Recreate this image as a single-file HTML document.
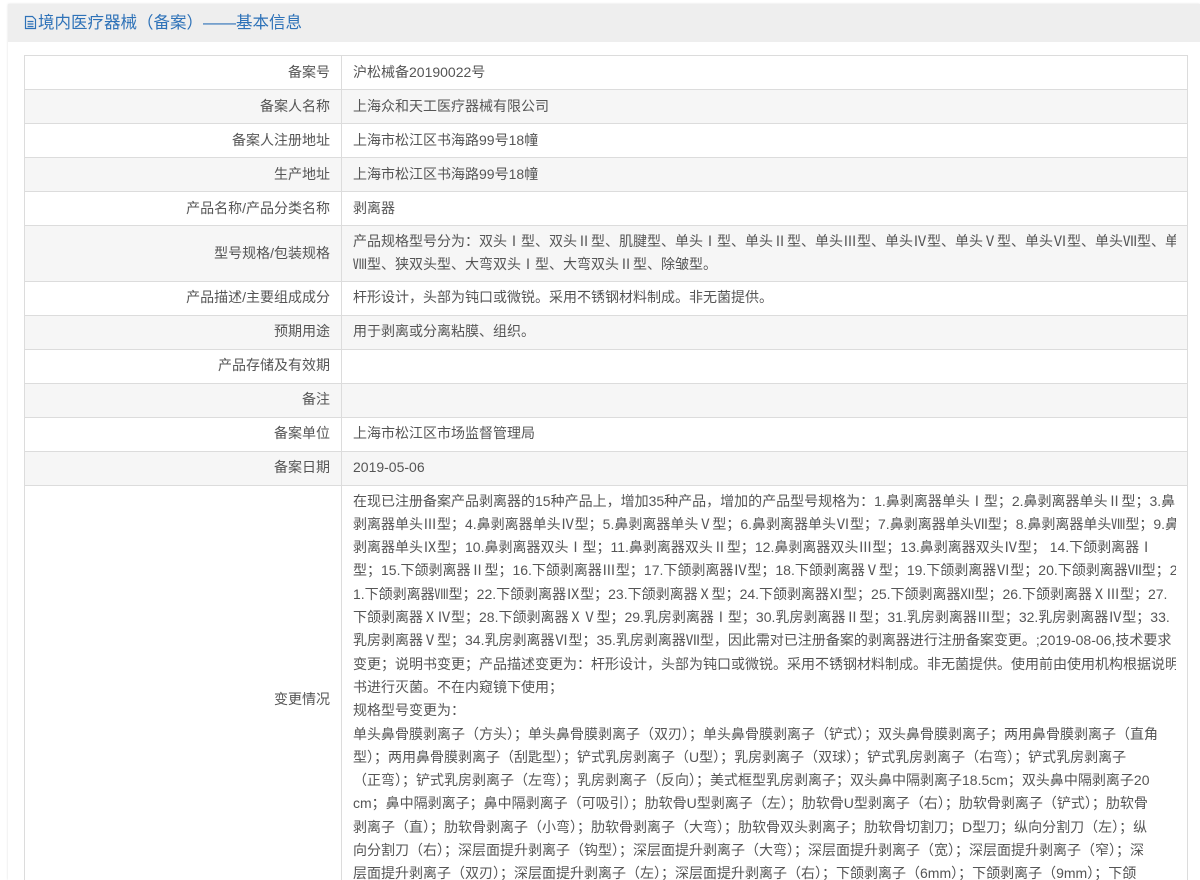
<!DOCTYPE html>
<html><head><meta charset="utf-8"><style>
html,body{margin:0;background:#fff;font-family:"Liberation Sans","Noto Sans CJK SC",sans-serif;color:#555;font-size:14px;width:1200px;height:880px;overflow:hidden}
.panel{position:absolute;left:8px;top:4px;width:1192px;height:876px;background:#fff;box-shadow:0 0 2px #ddd;overflow:hidden}
.hd{height:38px;background:#eeeeee;color:#2e72b8;font-size:16.5px;line-height:38px;padding-left:16px}
table{position:absolute;left:16px;top:51px;width:1164px;border-collapse:collapse;table-layout:fixed}
td{border:1px solid #dcdcdc;padding:0 11px;height:33px;line-height:23.3px;vertical-align:middle}
td.l{text-align:right;width:294px}
tr:nth-child(even) td{background:#f6f6f6}
.v div{white-space:nowrap;overflow:hidden}
</style></head><body>
<div class="panel">
<div class="hd"><svg width="13" height="15" viewBox="0 0 13 15" style="vertical-align:-2px;margin-right:1px"><path d="M1.5 1.5h7l3 3v9h-10z M3.5 6.5h6 M3.5 9h6 M3.5 11.5h6" fill="none" stroke="#2e72b8" stroke-width="1.2"/></svg>境内医疗器械（备案）——基本信息</div>
<table>
<tr><td class="l">备案号</td><td>沪松械备20190022号</td></tr>
<tr><td class="l">备案人名称</td><td>上海众和天工医疗器械有限公司</td></tr>
<tr><td class="l">备案人注册地址</td><td>上海市松江区书海路99号18幢</td></tr>
<tr><td class="l">生产地址</td><td>上海市松江区书海路99号18幢</td></tr>
<tr><td class="l">产品名称/产品分类名称</td><td>剥离器</td></tr>
<tr><td class="l" style="height:54px">型号规格/包装规格</td><td class="v" style="padding-top:4px;padding-bottom:4px"><div>产品规格型号分为：双头Ⅰ型、双头Ⅱ型、肌腱型、单头Ⅰ型、单头Ⅱ型、单头Ⅲ型、单头Ⅳ型、单头Ⅴ型、单头Ⅵ型、单头Ⅶ型、单头<br>Ⅷ型、狭双头型、大弯双头Ⅰ型、大弯双头Ⅱ型、除皱型。</div></td></tr>
<tr><td class="l">产品描述/主要组成成分</td><td>杆形设计，头部为钝口或微锐。采用不锈钢材料制成。非无菌提供。</td></tr>
<tr><td class="l">预期用途</td><td>用于剥离或分离粘膜、组织。</td></tr>
<tr><td class="l">产品存储及有效期</td><td></td></tr>
<tr><td class="l">备注</td><td></td></tr>
<tr><td class="l">备案单位</td><td>上海市松江区市场监督管理局</td></tr>
<tr><td class="l">备案日期</td><td>2019-05-06</td></tr>
<tr><td class="l">变更情况</td><td class="v" style="padding-top:4px;padding-bottom:4px"><div>在现已注册备案产品剥离器的15种产品上，增加35种产品，增加的产品型号规格为：1.鼻剥离器单头Ⅰ型；2.鼻剥离器单头Ⅱ型；3.鼻<br>剥离器单头Ⅲ型；4.鼻剥离器单头Ⅳ型；5.鼻剥离器单头Ⅴ型；6.鼻剥离器单头Ⅵ型；7.鼻剥离器单头Ⅶ型；8.鼻剥离器单头Ⅷ型；9.鼻<br>剥离器单头Ⅸ型；10.鼻剥离器双头Ⅰ型；11.鼻剥离器双头Ⅱ型；12.鼻剥离器双头Ⅲ型；13.鼻剥离器双头Ⅳ型； 14.下颌剥离器Ⅰ<br>型；15.下颌剥离器Ⅱ型；16.下颌剥离器Ⅲ型；17.下颌剥离器Ⅳ型；18.下颌剥离器Ⅴ型；19.下颌剥离器Ⅵ型；20.下颌剥离器Ⅶ型；2<br>1.下颌剥离器Ⅷ型；22.下颌剥离器Ⅸ型；23.下颌剥离器Ⅹ型；24.下颌剥离器Ⅺ型；25.下颌剥离器Ⅻ型；26.下颌剥离器ⅩⅢ型；27.<br>下颌剥离器ⅩⅣ型；28.下颌剥离器ⅩⅤ型；29.乳房剥离器Ⅰ型；30.乳房剥离器Ⅱ型；31.乳房剥离器Ⅲ型；32.乳房剥离器Ⅳ型；33.<br>乳房剥离器Ⅴ型；34.乳房剥离器Ⅵ型；35.乳房剥离器Ⅶ型，因此需对已注册备案的剥离器进行注册备案变更。;2019-08-06,技术要求<br>变更；说明书变更；产品描述变更为：杆形设计，头部为钝口或微锐。采用不锈钢材料制成。非无菌提供。使用前由使用机构根据说明<br>书进行灭菌。不在内窥镜下使用；<br>规格型号变更为：<br>单头鼻骨膜剥离子（方头）；单头鼻骨膜剥离子（双刃）；单头鼻骨膜剥离子（铲式）；双头鼻骨膜剥离子；两用鼻骨膜剥离子（直角<br>型）；两用鼻骨膜剥离子（刮匙型）；铲式乳房剥离子（U型）；乳房剥离子（双球）；铲式乳房剥离子（右弯）；铲式乳房剥离子<br>（正弯）；铲式乳房剥离子（左弯）；乳房剥离子（反向）；美式框型乳房剥离子；双头鼻中隔剥离子18.5cm；双头鼻中隔剥离子20<br>cm；鼻中隔剥离子；鼻中隔剥离子（可吸引）；肋软骨U型剥离子（左）；肋软骨U型剥离子（右）；肋软骨剥离子（铲式）；肋软骨<br>剥离子（直）；肋软骨剥离子（小弯）；肋软骨剥离子（大弯）；肋软骨双头剥离子；肋软骨切割刀；D型刀；纵向分割刀（左）；纵<br>向分割刀（右）；深层面提升剥离子（钩型）；深层面提升剥离子（大弯）；深层面提升剥离子（宽）；深层面提升剥离子（窄）；深<br>层面提升剥离子（双刃）；深层面提升剥离子（左）；深层面提升剥离子（右）；下颌剥离子（6mm）；下颌剥离子（9mm）；下颌<br>剥离子</div></td></tr>
</table>
</div>
</body></html>
